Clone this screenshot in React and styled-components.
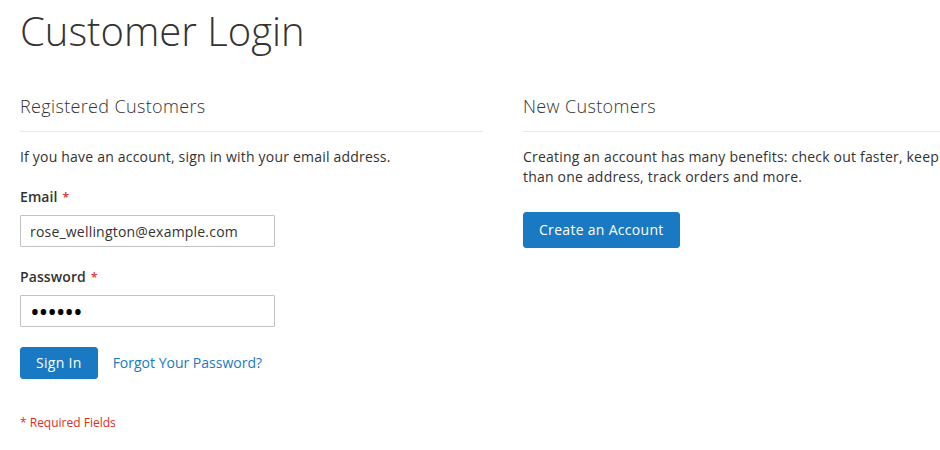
import React from "react";
import styled, { createGlobalStyle } from "styled-components";

const Global = createGlobalStyle`
html, body {
  margin: 0;
  padding: 0;
  overflow: hidden;
  background: #fff;
}
body {
  font-family: "Open Sans", "Liberation Sans", sans-serif;
  font-size: 14px;
  line-height: 20px;
  letter-spacing: 0.2px;
  color: #333;
}
`

const Page = styled.div`
padding: 9px 20px 0 20px;
width: 973px;
`
const PageTitle = styled.h1`
margin: 0 0 42px 0;
font-size: 40px;
font-weight: 300;
line-height: 44px;
letter-spacing: 0;
color: #333;
`
const Columns = styled.div`
display: grid;
grid-template-columns: 463px 470px;
gap: 40px;
`
const Block = styled.div`
display: flex;
flex-direction: column;
`
const BlockTitle = styled.h2`
margin: 0 0 15px 0;
padding-bottom: 14px;
border-bottom: 1px solid #e8e8e8;
font-size: 18px;
font-weight: 300;
line-height: 22px;
letter-spacing: 0.35px;
color: #333;
`
const Text = styled.p`
margin: 0 0 ${p => p.$gap}px 0;
`
const Field = styled.div`
display: flex;
flex-direction: column;
gap: 7px;
margin-bottom: 20px;
`
const Label = styled.label`
font-weight: 600;
letter-spacing: 0.1px;
`
const Star = styled.span`
color: #e02b27;
font-size: 12px;
margin-left: 5px;
`
const Input = styled.input`
box-sizing: border-box;
width: 255px;
height: 32px;
padding: 0 9px;
border: 1px solid #c2c2c2;
border-radius: 1px;
font-family: "Open Sans", "Liberation Sans", sans-serif;
font-size: ${p => (p.type === "password" ? 26 : 14)}px;
letter-spacing: ${p => (p.type === "password" ? -1.2 : 0.2)}px;
color: ${p => (p.type === "password" ? "#000" : "#333")};
background: #fff;
outline: none;
`
const Actions = styled.div`
display: flex;
align-items: center;
gap: 15px;
`
const Button = styled.button`
box-sizing: border-box;
height: ${p => p.$h}px;
padding: 0 ${p => p.$px}px;
background: #1979c3;
border: 1px solid #1979c3;
border-radius: 3px;
color: #fff;
font-family: "Open Sans", "Liberation Sans", sans-serif;
font-size: 14px;
font-weight: 500;
line-height: 20px;
letter-spacing: 0.3px;
cursor: pointer;
`
const Link = styled.a`
color: #1979c3;
text-decoration: none;
letter-spacing: 0;
`
const Required = styled.div`
margin-top: 35px;
font-size: 12px;
line-height: 17px;
letter-spacing: 0;
color: #e02b27;
`

export default function App() {
  return (
    <Page>
      <Global />
      <PageTitle>Customer Login</PageTitle>
      <Columns>
        <Block>
          <BlockTitle>Registered Customers</BlockTitle>
          <Text $gap={20}>If you have an account, sign in with your email address.</Text>
          <Field>
            <Label>Email<Star>*</Star></Label>
            <Input type="email" defaultValue="rose_wellington@example.com" />
          </Field>
          <Field>
            <Label>Password<Star>*</Star></Label>
            <Input type="password" defaultValue="secret" />
          </Field>
          <Actions>
            <Button $h={32} $px={15}>Sign In</Button>
            <Link href="#">Forgot Your Password?</Link>
          </Actions>
          <Required>* Required Fields</Required>
        </Block>
        <Block>
          <BlockTitle>New Customers</BlockTitle>
          <Text $gap={25}>
            Creating an account has many benefits: check out faster, keep more
            than one address, track orders and more.
          </Text>
          <Actions>
            <Button $h={36} $px={15}>Create an Account</Button>
          </Actions>
        </Block>
      </Columns>
    </Page>
  );
}
